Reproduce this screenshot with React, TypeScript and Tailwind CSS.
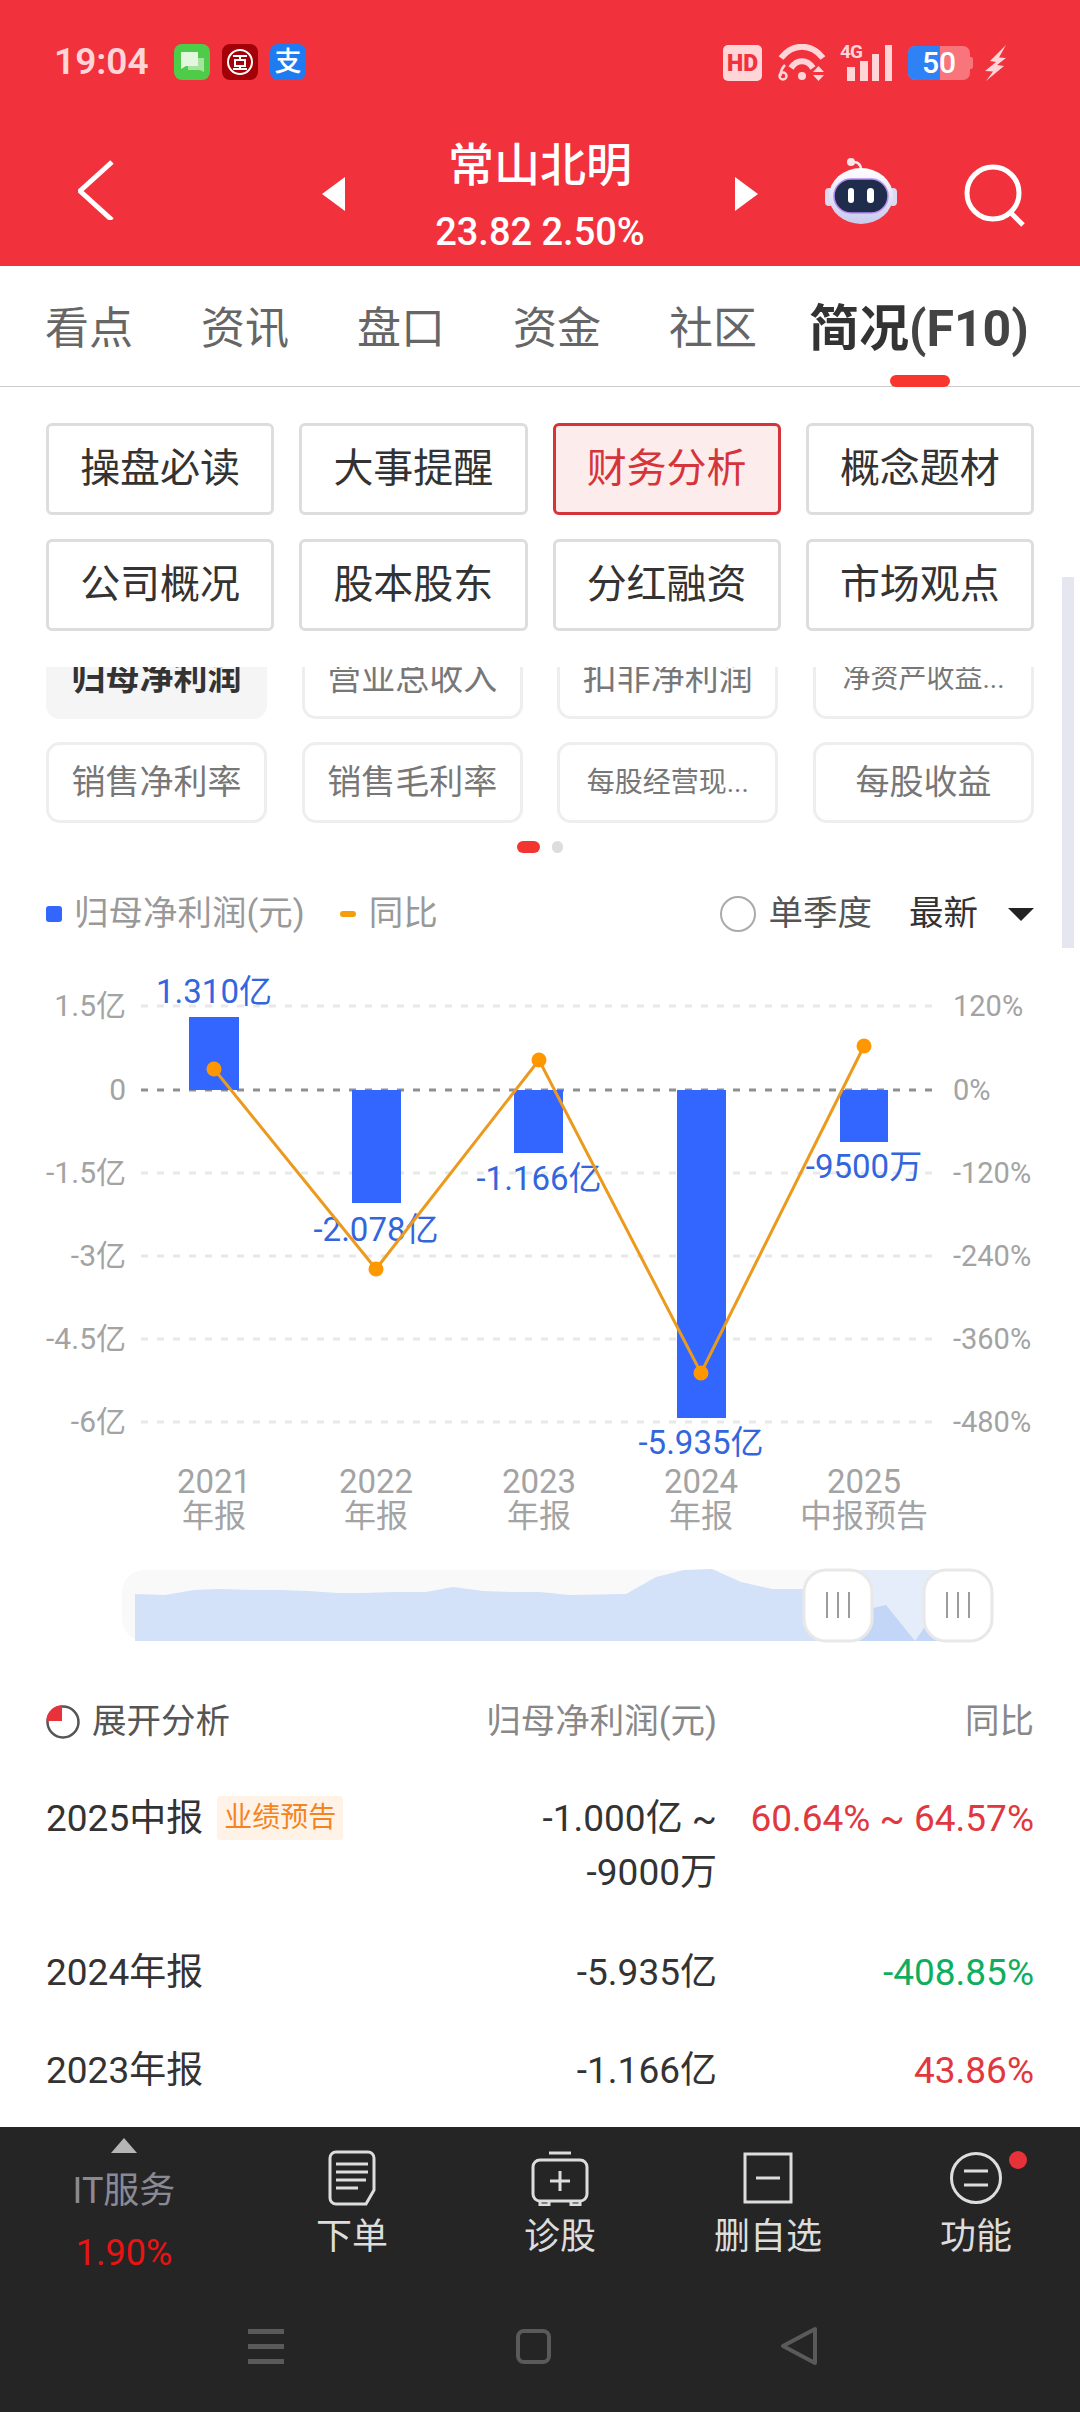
import React from 'react';

const FONT = '"Roboto", "Noto Sans CJK SC", sans-serif';

const topButtons = ['操盘必读', '大事提醒', '财务分析', '概念题材', '公司概况', '股本股东', '分红融资', '市场观点'];
const tabs = ['看点', '资讯', '盘口', '资金', '社区'];

const bars = [
  { x: 189, w: 50, top: 1017, bottom: 1090, label: '1.310亿', ly: 1003, lx: 214, year: '2021', kind: '年报', py: 1069 },
  { x: 352, w: 49, top: 1090, bottom: 1203, label: '-2.078亿', ly: 1241, lx: 376, year: '2022', kind: '年报', py: 1269 },
  { x: 514, w: 49, top: 1090, bottom: 1153, label: '-1.166亿', ly: 1190, lx: 539, year: '2023', kind: '年报', py: 1060 },
  { x: 677, w: 49, top: 1090, bottom: 1418, label: '-5.935亿', ly: 1454, lx: 701, year: '2024', kind: '年报', py: 1373 },
  { x: 840, w: 48, top: 1090, bottom: 1142, label: '-9500万', ly: 1178, lx: 864, year: '2025', kind: '中报预告', py: 1046 },
];

const gridRows = [
  { y: 1006, left: '1.5亿', right: '120%' },
  { y: 1090, left: '0', right: '0%' },
  { y: 1173, left: '-1.5亿', right: '-120%' },
  { y: 1256, left: '-3亿', right: '-240%' },
  { y: 1339, left: '-4.5亿', right: '-360%' },
  { y: 1422, left: '-6亿', right: '-480%' },
];

function StatusIcons() {
  return (
    <div className="flex items-center">
      {/* HD */}
      <div className="flex h-[36px] w-[39px] items-center justify-center rounded-[5px] bg-[#ffd5d8] text-[23px] font-black leading-none text-[#f1323c]">HD</div>
      <svg className="ml-[16px]" width="48" height="38" viewBox="0 0 48 38" fill="none" stroke="#ffd5d8" strokeWidth="6">
        <path d="M3 14C15 -1 33 -1 45 14" />
        <path d="M13 24C19 15 29 15 35 24" />
        <circle cx="24" cy="32" r="4" fill="#ffd5d8" stroke="none" />
        <path d="M35 28h11l-5.500-6zM35 31h11l-5.500 6z" fill="#ffd5d8" stroke="none" />
        <circle cx="5" cy="32" r="3.500" strokeWidth="2.500" />
        <path d="M2.500 32C2.500 27 4 24 7 21" strokeWidth="2.500" />
      </svg>
      <div className="relative ml-[14px] h-[36px] w-[52px]">
        <span className="absolute left-0 top-[-3px] text-[19px] font-bold leading-none tracking-[-1px] text-[#ffd5d8]">4G</span>
        <div className="absolute bottom-0 left-[7px] h-[14px] w-[8px] bg-[#ffd5d8]" />
        <div className="absolute bottom-0 left-[20px] h-[20px] w-[8px] bg-[#ffd5d8]" />
        <div className="absolute bottom-0 left-[32px] h-[27px] w-[7px] bg-[#ffd5d8]" />
        <div className="absolute bottom-0 right-0 h-[36px] w-[7px] bg-[#ffd5d8]" />
      </div>
      <div className="relative ml-[16px] flex h-[34px] w-[62px] overflow-hidden rounded-[7px] bg-[#f9757c]">
        <div className="h-full w-[32px] bg-[#2f82f5]" />
        <span className="absolute inset-0 text-center text-[30px] font-medium leading-[34px] text-white">50</span>
      </div>
      <div className="h-[12px] w-[3px] rounded-r-[2px] bg-[#f9757c]" />
      <svg className="ml-[12px]" width="22" height="36" viewBox="0 0 22 36" fill="#ffd5d8">
        <path d="M21 0 5 16l6 1-11 9 8 .500L1 36 19 21l-7-1 9-7-7-.500z" />
      </svg>
    </div>
  );
}

function RobotIcon() {
  return (
    <svg width="72" height="66" viewBox="0 0 72 66">
      <defs>
        <linearGradient id="head" x1="0" y1="0" x2="0" y2="1">
          <stop offset="0" stopColor="#ffffff" />
          <stop offset="1" stopColor="#c9c9ee" />
        </linearGradient>
      </defs>
      <path d="M27 5c5-2 9 1 9 7" fill="none" stroke="#f3e6ea" strokeWidth="2.500" />
      <circle cx="26" cy="4" r="4" fill="#f6e7ea" />
      <rect x="0" y="30" width="8" height="18" rx="4" fill="#ddd9f0" />
      <rect x="64" y="30" width="8" height="18" rx="4" fill="#ddd9f0" />
      <ellipse cx="36" cy="38" rx="32" ry="28" fill="url(#head)" />
      <rect x="9" y="21" width="54" height="34" rx="17" fill="#202c4b" stroke="#b68cf0" strokeWidth="1.500" />
      <rect x="23" y="30" width="6" height="15" rx="3" fill="#ffffff" />
      <rect x="42" y="30" width="7" height="15" rx="3.500" fill="#ffffff" />
    </svg>
  );
}

function TopBar() {
  return (
    <div className="h-[266px] bg-[#f1323c] text-white">
      {/* 狀態列 */}
      <div className="flex h-[100px] items-start justify-between pl-[54px] pr-[73px] pt-[44px]">
        <div className="flex items-center">
          <span className="w-[120px] text-[37px] font-semibold leading-[36px] text-[#ffd5d8]">19:04</span>
          <svg width="36" height="36" viewBox="0 0 36 36">
            <rect width="36" height="36" rx="8" fill="#4fcb4a" />
            <path d="M7 8h17v14H12l-5 3z" fill="#e3f7de" />
            <path d="M14 22h10v-8h6v14l-4-2H14z" fill="#a5e49f" />
          </svg>
          <svg className="ml-[12px]" width="36" height="36" viewBox="0 0 36 36" fill="none">
            <rect width="36" height="36" rx="8" fill="#a30008" />
            <circle cx="18" cy="18" r="12" stroke="#fff" strokeWidth="2" />
            <path d="M11 12h14M18 12v4M13 16h10v6H13zM11 25h14M18 22v3" stroke="#fff" strokeWidth="2" />
          </svg>
          <div className="ml-[12px] flex h-[36px] w-[36px] items-center justify-center rounded-[8px] bg-[#1e7bf2] text-[27px] font-medium leading-none text-white">支</div>
        </div>
        <StatusIcons />
      </div>
      {/* 標題列 */}
      <div className="flex h-[166px] items-start">
        <div className="w-[322px] pl-[78px] pt-[60px]">
          <svg width="36" height="60" viewBox="0 0 36 60" fill="none" stroke="#ffffff" strokeWidth="5">
            <path d="M34 2 2 31l32 29" />
          </svg>
        </div>
        <div className="pt-[77px]">
          <div className="h-0 w-0 border-y-[17px] border-r-[23px] border-y-transparent border-r-white" />
        </div>
        <div className="w-[390px] pt-[34px] text-center">
          <div className="text-[46px] font-medium leading-[62px]">常山北明</div>
          <div className="mt-[11px] text-[38px] font-medium leading-[50px]">23.82 2.50%</div>
        </div>
        <div className="pt-[77px]">
          <div className="h-0 w-0 border-y-[17px] border-l-[23px] border-y-transparent border-l-white" />
        </div>
        <div className="ml-[67px] pt-[58px]">
          <RobotIcon />
        </div>
        <div className="ml-[66px] pt-[64px]">
          <svg width="64" height="64" viewBox="0 0 64 64" fill="none" stroke="#ffffff" strokeWidth="5">
            <circle cx="30" cy="29" r="26" />
            <path d="M47 48l13 13" />
          </svg>
        </div>
      </div>
    </div>
  );
}

function Tabs() {
  return (
    <div className="relative flex h-[121px] items-center gap-[68px] border-b border-[#cccccc] pt-[6px] pl-[45px]">
      {tabs.map((t) => (
        <span key={t} className="text-[44px] leading-none text-[#666666]">{t}</span>
      ))}
      <span className="ml-[-16px] whitespace-nowrap text-[50px] font-bold leading-none text-[#333333]">
        简况<span className="text-[#444444]">(F10)</span>
      </span>
      <div className="absolute bottom-[-1px] left-[890px] h-[12px] w-[60px] rounded-full bg-[#f9352f]" />
    </div>
  );
}

function ChipRow({ items }: { items: { text: string; small?: boolean; active?: boolean }[] }) {
  return (
    <div className="flex justify-between">
      {items.map((c) => (
        <div
          key={c.text}
          className={`flex h-[81px] w-[221px] items-center justify-center rounded-[14px] ${
            c.active ? 'bg-[#f5f5f5] font-bold text-[#333333]' : 'border-[3px] border-[#eeeeee] text-[#777777]'
          } ${c.small ? 'text-[28px]' : 'text-[34px]'}`}
        >
          {c.text}
        </div>
      ))}
    </div>
  );
}

function Chart() {
  const points = bars.map((b) => `${b.lx},${b.py}`).join(' ');
  return (
    <svg className="mt-[21px] block" width="1080" height="600" viewBox="0 960 1080 600" style={{ fontFamily: FONT }}>
      {gridRows.map((r) => (
        <g key={r.y}>
          <line x1="141" x2="937" y1={r.y} y2={r.y} stroke={r.y === 1090 ? '#8f8f8f' : '#e8e8e8'} strokeWidth="3" strokeDasharray="7 9" />
          <text x="126" y={r.y + 10} textAnchor="end" fontSize="30" fill="#a3a3a3">{r.left}</text>
          <text x="953" y={r.y + 10} fontSize="29" fill="#a3a3a3">{r.right}</text>
        </g>
      ))}
      {bars.map((b) => (
        <g key={b.year}>
          <rect x={b.x} y={b.top} width={b.w} height={b.bottom - b.top} fill="#3366ff" />
          <text x={b.lx} y={1493} textAnchor="middle" fontSize="33" fill="#a3a3a3">{b.year}</text>
          <text x={b.lx} y={1527} textAnchor="middle" fontSize="32" fill="#a3a3a3">{b.kind}</text>
        </g>
      ))}
      {bars.map((b) => (
        <text key={b.label} x={b.lx} y={b.ly} textAnchor="middle" fontSize="33" fill="#3366dd">{b.label}</text>
      ))}
      <polyline points={points} fill="none" stroke="#ec9a1e" strokeWidth="3" />
      {bars.map((b) => (
        <circle key={b.py} cx={b.lx} cy={b.py} r="7.500" fill="#ff9800" />
      ))}
    </svg>
  );
}

function RangeSlider() {
  return (
    <svg className="block" width="1080" height="90" viewBox="0 1559 1080 90">
      <rect x="122" y="1569" width="870" height="71" rx="22" fill="#f9f9f9" />
      <rect x="838" y="1569" width="120" height="71" fill="#e6edfa" />
      <path
        d="M135 1640V1593L165 1594L194 1589L220 1588L253 1589L282 1589L308 1590L338 1592L364 1592L393 1591L426 1591L453 1586L483 1590L511 1591L540 1591L569 1594L626 1593L656 1576L684 1569L712 1568L741 1581L772 1588L838 1588V1640Z"
        fill="#d3e1f9"
      />
      <path d="M838 1640V1615L886 1604L915 1640L924 1627L958 1610V1640Z" fill="#c3d6f7" />
      {[838, 958].map((cx) => (
        <g key={cx}>
          <rect x={cx - 34} y="1569" width="68" height="71" rx="22" fill="#ffffff" stroke="#e8e8e8" strokeWidth="3" />
          <path d={`M${cx - 11} 1591V1617M${cx} 1591V1617M${cx + 11} 1591V1617`} stroke="#9c9c9c" strokeWidth="2" />
        </g>
      ))}
    </svg>
  );
}

function BottomBar() {
  const cols = [
    {
      label: '下单',
      icon: (
        <svg width="48" height="56" viewBox="0 0 48 56" fill="none" stroke="#dddddd" strokeWidth="3">
          <path d="M8 2h32a6 6 0 0 1 6 6v32l-8 14H8a6 6 0 0 1-6-6V8a6 6 0 0 1 6-6z" />
          <path d="M8 14h32M8 22h32M8 30h30M8 38h22" />
        </svg>
      ),
    },
    {
      label: '诊股',
      icon: (
        <svg width="58" height="56" viewBox="0 0 58 56" fill="none" stroke="#dddddd" strokeWidth="3">
          <path d="M18 3h22" />
          <rect x="2" y="10" width="54" height="41" rx="7" />
          <path d="M29 21v20M19 31h20" />
          <path d="M9 51v4h9v-4M40 51v4h9v-4" />
        </svg>
      ),
    },
    {
      label: '删自选',
      icon: (
        <svg width="50" height="52" viewBox="0 0 50 52" fill="none" stroke="#dddddd" strokeWidth="3">
          <rect x="2" y="2" width="46" height="48" />
          <path d="M13 26h24" />
        </svg>
      ),
    },
    {
      label: '功能',
      icon: (
        <svg width="52" height="54" viewBox="0 0 52 54" fill="none" stroke="#dddddd" strokeWidth="3">
          <circle cx="26" cy="27" r="24.500" />
          <path d="M14 20h24M14 34h24" />
        </svg>
      ),
    },
  ];
  return (
    <div className="flex h-[285px] flex-col bg-[#252525]">
      <div className="flex h-[180px]">
        <div className="flex w-[248px] flex-col items-center pt-[11px]">
          <div className="h-0 w-0 border-x-[13px] border-b-[15px] border-x-transparent border-b-[#b5b5b5]" />
          <div className="mt-[15px] text-[36px] leading-[46px] text-[#8a8a96]">IT服务</div>
          <div className="mt-[17px] text-[36px] leading-[44px] text-[#e81414]">1.90%</div>
        </div>
        {cols.map((c) => (
          <div key={c.label} className="relative flex w-[208px] flex-col items-center pt-[23px]">
            <div className="flex h-[56px] items-center">{c.icon}</div>
            <div className="mt-[7px] text-[36px] leading-[48px] text-[#dddddd]">{c.label}</div>
            {c.label === '功能' && <div className="absolute left-[137px] top-[24px] h-[18px] w-[18px] rounded-full bg-[#e8323a]" />}
          </div>
        ))}
      </div>
      {/* 系統導覽列 */}
      <div className="flex items-center pt-[19px]">
        <div className="ml-[248px] flex w-[36px] flex-col gap-[10px]">
          <div className="h-[5px] bg-[#5a5a5a]" />
          <div className="h-[5px] bg-[#5a5a5a]" />
          <div className="h-[5px] bg-[#5a5a5a]" />
        </div>
        <div className="ml-[232px] h-[35px] w-[35px] rounded-[8px] border-[4px] border-[#5a5a5a]" />
        <svg className="ml-[229px]" width="38" height="40" viewBox="0 0 38 40" fill="none" stroke="#5a5a5a" strokeWidth="4" strokeLinejoin="round">
          <path d="M35 3v34L3 20z" />
        </svg>
      </div>
    </div>
  );
}

export default function App() {
  return (
    <div className="relative flex h-[2412px] w-[1080px] flex-col overflow-hidden bg-white" style={{ fontFamily: FONT }}>
      <TopBar />
      <Tabs />

      <div className="grid grid-cols-4 gap-x-[25px] gap-y-[24px] px-[46px] pt-[36px]">
        {topButtons.map((b) => (
          <div
            key={b}
            className={`flex h-[92px] items-center justify-center rounded-[6px] border-[3px] text-[40px] ${
              b === '财务分析' ? 'border-[#d6343b] bg-[#fdecec] text-[#d6343b]' : 'border-[#dddddd] text-[#333333]'
            }`}
          >
            {b}
          </div>
        ))}
      </div>

      {/* 指標切換 */}
      <div className="mt-[36px] flex h-[156px] flex-col justify-end gap-[23px] overflow-hidden px-[46px]">
        <ChipRow
          items={[
            { text: '归母净利润', active: true },
            { text: '营业总收入' },
            { text: '扣非净利润' },
            { text: '净资产收益...', small: true },
          ]}
        />
        <ChipRow
          items={[
            { text: '销售净利率' },
            { text: '销售毛利率' },
            { text: '每股经营现...', small: true },
            { text: '每股收益' },
          ]}
        />
      </div>
      <div className="mt-[18px] flex justify-center gap-[12px] pr-[1px]">
        <div className="h-[12px] w-[23px] rounded-full bg-[#f2352f]" />
        <div className="h-[12px] w-[11px] rounded-full bg-[#dddddd]" />
      </div>

      {/* 圖例 */}
      <div className="mt-[36px] flex h-[50px] items-center px-[46px] text-[34.500px] text-[#999999]">
        <div className="h-[16px] w-[16px] rounded-[3px] bg-[#3366ff]" />
        <span className="ml-[12px]">归母净利润(元)</span>
        <div className="ml-[35px] h-[6px] w-[16px] rounded-full bg-[#f59e0b]" />
        <span className="ml-[13px]">同比</span>
        <div className="ml-auto h-[36px] w-[36px] rounded-full border-2 border-[#aaaaaa]" />
        <span className="ml-[13px] text-[#555555]">单季度</span>
        <span className="ml-[37px] text-[#333333]">最新</span>
        <div className="ml-[30px] h-0 w-0 border-x-[13px] border-t-[13px] border-x-transparent border-t-[#222222]" />
      </div>

      <Chart />
      <RangeSlider />

      {/* 表格 */}
      <div className="mt-[47px] flex h-[50px] items-center px-[46px] text-[34.500px] text-[#888888]">
        <svg width="34" height="34" viewBox="0 0 34 34" fill="none">
          <circle cx="17" cy="17" r="15.500" stroke="#555555" strokeWidth="2.500" />
          <path d="M15 1.500V15H1.500A14 14 0 0 1 15 1.500z" fill="#e8323a" stroke="#e8323a" strokeWidth="2" />
        </svg>
        <span className="ml-[12px] text-[#555555]">展开分析</span>
        <span className="ml-auto w-[260px] text-right">归母净利润(元)</span>
        <span className="w-[317px] text-right">同比</span>
      </div>

      <div className="mt-[45px] flex items-start px-[46px] text-[37px] leading-[54px] text-[#333333]">
        <span>2025中报</span>
        <span className="ml-[14px] mt-[4px] rounded-[4px] bg-[#fff3e8] px-[7px] text-[28px] leading-[44px] text-[#f5841f]">业绩预告</span>
        <span className="ml-auto w-[190px] text-right">-1.000亿 ~ -9000万</span>
        <span className="w-[317px] text-right text-[#e0383e]">60.64% ~ 64.57%</span>
      </div>
      <div className="mt-[46px] flex items-start px-[46px] text-[37px] leading-[54px] text-[#333333]">
        <span>2024年报</span>
        <span className="ml-auto">-5.935亿</span>
        <span className="w-[317px] text-right text-[#0fae5f]">-408.85%</span>
      </div>
      <div className="mt-[44px] flex items-start px-[46px] text-[37px] leading-[54px] text-[#333333]">
        <span>2023年报</span>
        <span className="ml-auto">-1.166亿</span>
        <span className="w-[317px] text-right text-[#e0383e]">43.86%</span>
      </div>

      <div className="mt-auto">
        <BottomBar />
      </div>

      {/* 捲軸 */}
      <div className="absolute right-[6px] top-[577px] h-[371px] w-[12px] bg-[#e6e6f0]" />
    </div>
  );
}
